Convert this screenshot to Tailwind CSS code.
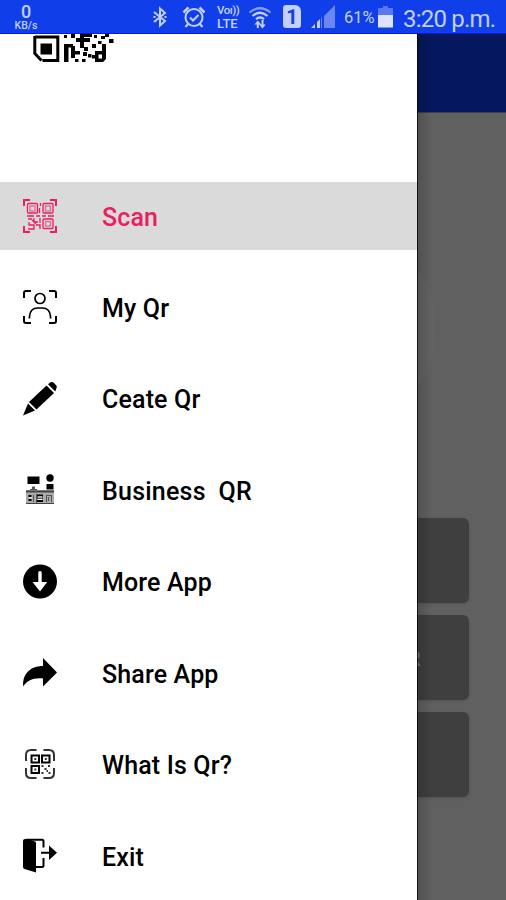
<!DOCTYPE html>
<html lang="en">
  <head>
    <meta charset="UTF-8" />
    <meta name="viewport" content="width=device-width, initial-scale=1.0" />
    <title>QR Scanner</title>
    <script src="https://cdn.jsdelivr.net/npm/@tailwindcss/browser@4"></script>
  </head>
  <body class="h-[900px] w-[506px] overflow-hidden bg-[#606060] font-['Roboto',sans-serif]">
    <!-- Status bar -->
    <header class="flex h-[34px] items-center border-b border-[#0a18e0] bg-[#103fea] text-[#c3d0fd]">
      <div class="ml-[12px] flex w-7 flex-col items-center pt-[1px] font-medium">
        <span class="text-[18px] leading-[17px]">0</span>
        <span class="text-[10.5px] leading-[11px]">KB/s</span>
      </div>
      <svg class="ml-[112px] h-[22px] w-4" viewBox="0 0 16 22" fill="none" stroke="currentColor" stroke-width="2">
        <path d="M2 6l11 9-5 4.500V2.500L13 7 2 16" />
        <path d="M1.500 11h2M12.500 11h2" />
      </svg>
      <svg class="ml-[14px] h-6 w-6" viewBox="0 0 24 24" fill="none" stroke="currentColor" stroke-width="2">
        <circle cx="12" cy="12.500" r="8.500" />
        <path d="M8 12.500l3 3 5.500-5.500M6 19l-2.500 3M18 19l2.500 3" />
        <path d="M1.500 7.500L6.500 2.500M22.500 7.500l-5-5" stroke-width="2.500" />
      </svg>
      <div class="ml-[11px] flex w-[24px] flex-col pt-[1px] font-medium">
        <span class="text-[11.500px] leading-[13px] tracking-[-0.5px] whitespace-nowrap">Voı))</span>
        <span class="text-[13px] leading-[13px]">LTE</span>
      </div>
      <svg class="ml-[7px] h-6 w-6" viewBox="0 0 24 24" fill="none" stroke="currentColor" stroke-width="2.200">
        <path d="M1.500 7.500Q12 -1 22.500 7.500" opacity=".65" />
        <path d="M4.500 11Q12 4.500 19.500 11M8 14.200q4-3.400 8 0" />
        <path d="M9.800 23v-6M14.500 15v6" stroke-width="2" />
        <path d="M6.500 19.500l3.300-4 3.300 4zM11.200 19.500l3.300 4 3.300-4z" fill="currentColor" stroke="none" />
      </svg>
      <div class="ml-[11px] flex h-[23px] w-[18px] items-center justify-center rounded-[3px] rounded-tr-[6px] bg-[#c3d0fd] text-[20px] font-bold text-[#103fea]">1</div>
      <svg class="ml-[10px] h-[23px] w-6" viewBox="0 0 24 23" fill="currentColor">
        <path d="M13 11L24 0v23H13z" opacity=".5" />
        <path d="M0 23l4-4v4zM6 17l3-3v9H6z" />
        <path d="M11 12l-1 1v10h1z" opacity=".5" />
      </svg>
      <span class="ml-[9px] w-[31px] pt-[3px] text-[16.500px]">61%</span>
      <svg class="ml-[3px] h-[22px] w-[15px]" viewBox="0 0 15 22" fill="currentColor">
        <path d="M5 0h5v2h5v8H0V2h5z" opacity=".4" />
        <path d="M0 9h15v12.500H0z" fill="#dbe3ff" />
      </svg>
      <span class="ml-[10px] pt-[4px] text-[24px] leading-none tracking-[-0.8px] whitespace-nowrap">3:20 p.m.</span>
    </header>

    <div class="flex h-[866px]">
      <!-- Drawer -->
      <nav class="flex w-[417px] shrink-0 flex-col bg-white text-[25px] font-medium tracking-[0.15px] text-black">
        <div class="h-[148px] pl-8">
          <svg class="h-8 w-[84px]" viewBox="32 34 84 32">
            <path d="M34.800 37H57.800V60.500H42.500M34.800 36V53.500L41.500 60.500" fill="none" stroke="#000" stroke-width="3" />
            <path d="M40.500 43.500h11.500v11h-11.500z" />
            <path d="M64 35h3v3h-3zM71 34h4v4h-4zM80 34h12v3H80zM76 38h14v4H76zM80 36h4v12h-4z" />
            <path d="M64 44h9v3.500h-4.500V62H64zM71 46h4v12h-4zM84 47h4v4h-4zM75 51h5v3.500h-5zM75 59h3.500v3H75zM83 52h4v4h-4zM82 59h3.500v3H82z" />
            <path d="M94 35h3v3h-3zM101 36h4v-2h4v3h-4v2h-4zM109 39h4.500v4H109zM98 41h3.500v3H98zM92 44h4v4h-4zM88 54h3.500v3.500H88z" />
            <path d="M102 44h4v15l-3 3h-8v-3.500h-3V55h3v-4h7zM98.500 54.500v4h3.500v-4z" fill-rule="evenodd" />
          </svg>
        </div>

        <div class="flex flex-col gap-[23.4px]">
          <a class="flex h-[68px] items-center bg-[#dadada] pl-[22px] text-[#ea1e63]">
            <svg class="h-9 w-9" viewBox="0 0 36 36" fill="none" stroke="currentColor" stroke-width="1.500">
              <path d="M2 8V2h6M28 2h6v6M34 28v6h-6M8 34H2v-6" stroke-width="2" />
              <g stroke-width="1.300">
                <rect x="5.500" y="5.500" width="10" height="9.500" rx="1" />
                <rect x="8" y="8" width="5" height="5" opacity=".6" />
                <rect x="21" y="5.500" width="10" height="9.500" rx="1" />
                <rect x="23.500" y="8" width="5" height="5" opacity=".6" />
                <rect x="21" y="21" width="10" height="9.500" rx="1" />
                <rect x="23.500" y="23.500" width="5" height="4.500" opacity=".6" />
                <path d="M18.500 5v3M17.500 10v5M5 18h7M14 18h4M20 18h4M26 18h6M6 21h4M12 20v4h4M18 20v5M7 24v3h5v4H6M14 27h4v4M10 22l4 4" />
              </g>
            </svg>
            <span class="ml-[44px] pt-[3px]">Scan</span>
          </a>

          <a class="flex h-[68px] items-center pl-[22px]">
            <svg class="h-9 w-9" viewBox="0 0 36 36" fill="none" stroke="currentColor" stroke-width="2">
              <path d="M2 9V4q0-2 2-2h5M27 2h5q2 0 2 2v5M34 27v5q0 2-2 2h-5M9 34H4q-2 0-2-2v-5" />
              <circle cx="18" cy="9.500" r="5" stroke-width="1.700" />
              <path d="M7.500 29.500V27q1-8 8-8h5q7 0 8 8v2.500" stroke-width="1.700" />
            </svg>
            <span class="ml-[44px] pt-[3px]">My Qr</span>
          </a>

          <a class="flex h-[68px] items-center pl-[22px]">
            <svg class="h-9 w-9" viewBox="0 0 36 36" fill="currentColor">
              <path d="M24.500 4.500l7.500 7.500L14.500 28.500l-7.500-7.500z" />
              <path d="M26 3.300l2.500-2q1.500-.8 3 .3l2.800 2.800q1.200 1.500 0 3L33.300 10.500z" />
              <path d="M6 22.500l7 7L1 34.500z" />
            </svg>
            <span class="ml-[44px] pt-[2px]">Ceate Qr</span>
          </a>

          <a class="flex h-[68px] items-center pl-[22px]">
            <svg class="h-9 w-9" viewBox="0 0 36 36" fill="currentColor">
              <path d="M5.500 4.500h12V12h-12z" />
              <path d="M10 14.500h3v3h-3zM8 17h7v1H8z" fill="#555" />
              <circle cx="28" cy="6" r="3.700" />
              <path d="M24.500 12h7v5.500h-7z" />
              <path d="M4 18h28v14H4z" fill="#aaa" />
              <path d="M4 18.500h28v2H4zM4 31h28v1H4z" fill="#444" />
              <path d="M6.500 23h3v2h-3zM6.500 27h3v2h-3zM15 22.500h6v2h-6zM15 25.500h6v1h-6zM15 28h6v2h-6z" />
              <path d="M11 23h1v7h-1zM14 22h1v9h-1zM24 23h6v1h-6zM24 23h1v7h-1zM26 25h1v4h-1zM29 23h1v7h-1z" fill="#555" />
              <path d="M7 25.200h3v1H7zM16 24.500h4v1h-4zM16 27h4v1h-4z" fill="#fff" />
            </svg>
            <span class="ml-[44px] pt-[3px] tracking-[0.22px] whitespace-pre">Business  QR</span>
          </a>

          <a class="flex h-[68px] items-center pl-[22px]">
            <svg class="h-9 w-9" viewBox="0 0 36 36">
              <circle cx="18" cy="17.500" r="17" fill="currentColor" />
              <path d="M16.300 8q1.700-2 3.400 0v10h5.500L18 27.500 10.500 18h5.800z" fill="#fff" />
            </svg>
            <span class="ml-[44px] pt-[3px]">More App</span>
          </a>

          <a class="flex h-[68px] items-center pl-[22px]">
            <svg class="h-9 w-9" viewBox="0 0 36 36" fill="currentColor">
              <path d="M21 3l14 14.500L21 31.500V23.500C11 22.500 5 25.500 1.300 31.500C0 19.500 8 11 21 11z" />
            </svg>
            <span class="ml-[44px] pt-[3px]">Share App</span>
          </a>

          <a class="flex h-[68px] items-center pl-[22px]">
            <svg class="mt-[2px] h-9 w-9" viewBox="0 0 36 36" fill="none" stroke="currentColor">
              <path d="M4 14V8q0-5 5-5h5.500M21.500 3H27q5 0 5 5v6M32 21v5q0 5-5 5h-5.500M14.500 31H9q-5 0-5-5v-5" stroke="#333" stroke-width="2" />
              <path d="M9.500 8.500h7.500v7h-7.500zM20 8.500h7.500v7H20zM9.500 19h7.500v7h-7.500z" stroke-width="2" />
              <path d="M12.300 11h2v2h-2zM22.800 11h2v2h-2zM12.300 21.500h2v2h-2zM19.500 18h2v2h-2zM26 18h2v2h-2zM22.500 21h2v2h-2zM24.500 23h1.500v2h-1.500zM19.500 25h2v2h-2zM26.500 25h2v2h-2z" fill="#333" stroke="none" />
            </svg>
            <span class="ml-[44px] pt-[3px]">What Is Qr?</span>
          </a>

          <a class="flex h-[68px] items-center pl-[22px]">
            <svg class="h-9 w-9" viewBox="0 0 36 36" fill="currentColor">
              <path d="M1 3q0-2 2-2h2l8 2.500q1 .4 1 1.500V34.500L2.500 31Q1 30.500 1 29z" />
              <path d="M4 1.800h16q1.500 0 1.500 1.500V9.500M21.500 20v7.500q0 1.500-1.500 1.500h-6" fill="none" stroke="currentColor" stroke-width="2" />
              <path d="M19 13.800h8V7.500l8 7.300-8 7.200v-6.200h-8z" />
            </svg>
            <span class="ml-[44px] pt-[4px]">Exit</span>
          </a>
        </div>
      </nav>

      <!-- Dimmed page behind the drawer -->
      <main class="relative flex grow flex-col overflow-hidden">
        <div class="h-[79px] shrink-0 border-b border-[#3c3f4c] bg-[#05185f]"></div>
        <div class="absolute top-[184px] left-[-202px] h-[220px] w-[220px] rounded-full bg-[#636363]"></div>
        <div class="mt-[405px] flex flex-col gap-[12px]">
          <div class="h-[85px] w-[52px] rounded-r-[6px] bg-[#3f3f3f] shadow-sm"></div>
          <div class="flex h-[85px] w-[52px] items-center overflow-hidden rounded-r-[6px] bg-[#3f3f3f] shadow-sm">
            <span class="ml-[-9px] pt-[3px] text-[20px] font-medium text-[#777]">R</span>
          </div>
          <div class="h-[85px] w-[52px] rounded-r-[6px] bg-[#3f3f3f] shadow-sm"></div>
        </div>
        <!-- Drawer edge shadow -->
        <div class="absolute inset-y-0 left-0 w-4 border-l border-black/80 bg-linear-to-r from-black/15 to-transparent"></div>
      </main>
    </div>
  </body>
</html>
